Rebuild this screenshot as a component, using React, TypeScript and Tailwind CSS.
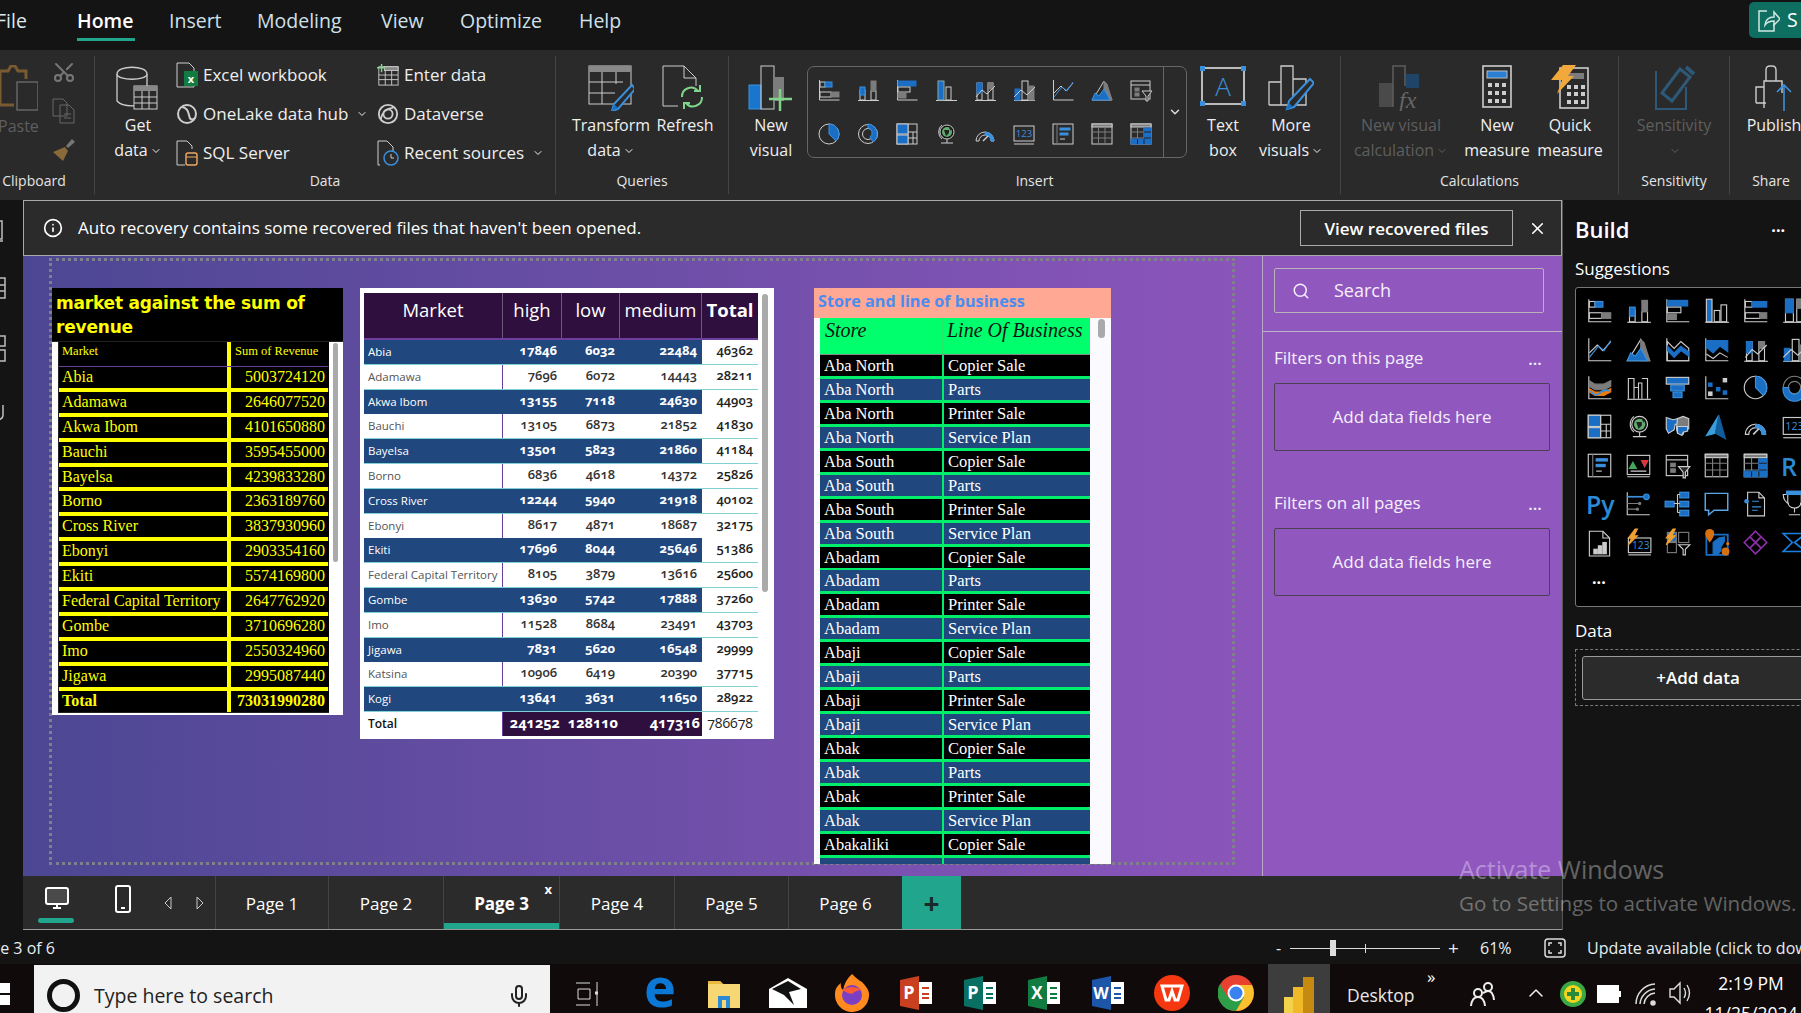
import type { ReactNode } from 'react';
import { ChevronDown, ChevronUp, Info, Mic, Scissors, Search, X } from 'lucide-react';

const L = '#cdcdcd';
const B = '#1a6fc4';
const G = '#7c7c7c';

// tiny svg helpers so the chart glyphs stay readable
const rc = (x: number, y: number, w: number, h: number, f = 'none', s = L) => (
  <rect x={x} y={y} width={w} height={h} fill={f} stroke={s} strokeWidth="1" />
);
const pt = (d: string, f = 'none', s = L, sw = 1) => <path d={d} fill={f} stroke={s} strokeWidth={sw} />;
const axis = pt('M2.5 2v20h20');
const base = pt('M2 22.5h21');

const viz: Record<string, ReactNode> = {
  stackBar: <>{axis}{rc(3, 4, 5, 5)}{rc(8, 4, 7, 5, B, '#3a90dd')}{rc(3, 14, 11, 5)}{rc(14, 14, 8, 5, G, G)}</>,
  stackCol: <>{base}{rc(4, 12, 5, 10)}{rc(4, 9, 5, 8, B, '#3a90dd')}{rc(15, 13, 5, 9)}{rc(15, 3, 5, 10, G, G)}</>,
  clusBar: <>{axis}{rc(3, 3, 18, 5, B, B)}{rc(3, 9, 12, 5, 'none')}{rc(3, 15, 8, 5, G, G)}</>,
  clusCol: <>{base}{rc(4, 3, 6, 19, B, '#8aa')}{rc(12, 9, 5, 13)}</>,
  clusCol2: <>{base}{rc(3, 2, 5, 20, B, L)}{rc(10, 12, 5, 10)}{rc(16, 7, 5, 15)}</>,
  fullBar: <>{axis}{rc(3, 4, 6, 5)}{rc(9, 4, 13, 5, B, B)}{rc(3, 14, 13, 5)}{rc(16, 14, 6, 5, G, G)}</>,
  fullCol: <>{base}{rc(4, 2, 7, 20)}{rc(4, 2, 7, 12, B, B)}{rc(14, 2, 7, 20)}{rc(14, 2, 7, 8, G, G)}</>,
  line: <>{axis}{pt('M3 15l7-7 5 5 7-8')}{pt('M3 19l8-10 5 4 6-9', 'none', '#3a90dd')}</>,
  area: <>{pt('M2 22l6-9 6-10 8 19z')}{pt('M14 3l3 3 5 16h-8z', G, G)}{pt('M2 22l3-7 4 3 5-7 6 11z', B, '#3a90dd')}</>,
  stackArea: <>{axis}{pt('M3 5l6 6 6-6 7 6v11H3z', 'none')}{pt('M3 9l6 6 6-6 7 5v4l-7-5-6 6-6-6z', B, B)}</>,
  ribbonArea: <>{axis}{pt('M3 4h19v10l-7-5-6 6-6-5z', B, B)}{pt('M3 16l6 4 6-5 7 4')}</>,
  lineCol: <>{base}{rc(4, 5, 5, 17)}{rc(4, 5, 5, 10, B, B)}{rc(15, 5, 5, 17)}{rc(15, 5, 5, 6, G, G)}{pt('M3 19l6-7 5 4 8-8')}</>,
  lineCol2: <>{base}{rc(3, 11, 5, 11, B, B)}{rc(10, 3, 6, 19)}{rc(17, 8, 5, 14, G, G)}{pt('M2 19l7-7 6 5 8-8')}</>,
  ribbon: <>{axis}{pt('M3 6l5 3h8l6-3v5l-6 3H8l-5-3z', G, G)}{pt('M3 13l5 3h8l6-3v3l-6 3H8l-5-3z', '#e87a10', '#e87a10')}{pt('M4 15q4 6 8 2t9-2', 'none', '#3a90dd', 1.5)}</>,
  waterfall: <>{base}{pt('M3 22V4h5v18M8 12h4v10M12 12V8h3v14M15 4h5v18', 'none')}</>,
  funnel: <>{rc(2, 3, 20, 6, B, L)}{rc(6, 10, 12, 5, B, '#3a90dd')}{rc(8, 16, 8, 5, B, '#3a90dd')}</>,
  scatter: <>{axis}{rc(5, 8, 3, 3, B, B)}{rc(12, 12, 3, 3, B, B)}{rc(18, 4, 3, 3, L, L)}{rc(5, 16, 3, 3, L, L)}{rc(18, 15, 3, 3, B, B)}</>,
  pie: <><circle cx="12" cy="12" r="10" fill="none" stroke={L} />{pt('M12 2a10 10 0 0 1 7 17l-7-7z', B, '#3a90dd')}</>,
  donut: <><circle cx="12" cy="12" r="9.5" fill="none" stroke={L} /><circle cx="12" cy="12" r="5.5" fill="none" stroke={L} />{pt('M12 2a10 10 0 0 1 5 18l-3-5a5 5 0 0 0-2-9z', B, '#3a90dd')}</>,
  donut2: <><circle cx="12" cy="12" r="10" fill="none" stroke={G} strokeWidth="1" /><circle cx="12" cy="12" r="5.5" fill="none" stroke={G} />{pt('M2 12a10 10 0 0 0 20 4l-5-2a5 5 0 0 1-10-2z', B, '#3a90dd')}</>,
  tree: <>{rc(2, 2, 20, 20)}{pt('M13 2v20M13 10h9M13 16h9M18 10v12')}{rc(2, 2, 11, 10, B, L)}{rc(2, 13, 11, 9, B, L)}</>,
  globe: <><circle cx="13" cy="10" r="7" fill="#111" stroke={L} /><circle cx="13" cy="10" r="5" fill="#5fae6f" /><path d="M10 8h5v3l-3 3zM15 6h2v3z" fill="#222" />{pt('M8 3a9 9 0 0 0 0 14M7 21h12M13 17v4')}</>,
  fillMap: <>{pt('M2 4l6 2 4-1v5h-2l-1 5-5 3-2-4z', B, L)}{pt('M12 5l5-2 5 2v9l-4 1-1 4-5-1-1-4z', G, L)}{pt('M12 12h9v4l-4 1-1 3-4-2z', B, L)}</>,
  arc: <>{pt('M14 2L3 20l8-2z', '#3a9fdc', '#3a9fdc')}{pt('M14 2l6 21-9-5z', '#125e9c', '#125e9c')}</>,
  gauge: <>{pt('M3 19a9 9 0 0 1 18 0h-3a6 6 0 0 0-12 0z', 'none')}{pt('M12 10a9 9 0 0 1 9 9h-3a6 6 0 0 0-6-6z', '#3a90dd', '#3a90dd')}{pt('M10 19l5-5', 'none', L, 1.5)}</>,
  card: <>{rc(2, 4, 20, 15)}{pt('M2 22h20')}<text x="12" y="15" fontSize="9.5" fill="#3a90dd" textAnchor="middle" fontFamily="Open Sans">123</text></>,
  list: <>{rc(2, 2, 20, 20)}{pt('M6 2v20', 'none', G)}{rc(9, 6, 10, 2, '#3a90dd', '#3a90dd')}{rc(9, 11, 8, 2, '#3a90dd', '#3a90dd')}{pt('M9 17h5', 'none', L)}</>,
  kpi: <>{rc(2, 3, 20, 17)}{pt('M2 22h20M5 17h14')}<path d="M7 8l4 7H3zM14 7h7l-3.5 7z" fill="#3fa85a" /><path d="M14 7h7l-3.5 7z" fill="#e0323c" /></>,
  slicer: <>{rc(2, 3, 19, 18)}{pt('M2 7h19')}{rc(6, 10, 4, 3, G, G)}{rc(6, 15, 4, 3, G, G)}{pt('M13 13h10l-4 5v5h-2v-5z', '#2a2a2a')}</>,
  table: <>{rc(2, 2, 20, 20)}{rc(2, 2, 20, 3, G, L)}{pt('M2 10h20M2 16h20M8.5 5v17M15 5v17', 'none', G)}</>,
  matrix: <>{rc(2, 2, 20, 20)}{rc(2, 2, 20, 3, G, L)}{pt('M2 10h20M2 16h20M8.5 5v17M15 5v17', 'none', G)}{rc(15, 6, 7, 15, B, B)}{rc(2, 17, 20, 5, B, B)}{pt('M15 10h7M15 16h7M8.5 17v5M15 17v5', 'none', '#222')}</>,
  influ: <>{pt('M2 2v20h20')}{pt('M2 6h14', 'none', '#3a90dd', 1.5)}<circle cx="19" cy="6" r="2.5" fill={B} stroke="#3a90dd" />{pt('M2 12h10M2 17h8', 'none', G)}<circle cx="13" cy="12" r="1.5" fill={G} /><circle cx="11" cy="17" r="1.5" fill={G} /></>,
  decomp: <>{rc(1, 10, 8, 5, B, '#3a90dd')}{rc(14, 2, 8, 5, B, '#3a90dd')}{rc(14, 10, 8, 5, B, '#3a90dd')}{rc(14, 18, 8, 5, B, '#3a90dd')}{pt('M9 12h3M12 4v16M12 4h2M12 12h2M12 20h2')}</>,
  qa: <>{pt('M2 3h20v15H10l-5 4v-4H2z', 'none', '#5aa6e8', 1.3)}</>,
  doc: <>{pt('M5 2h10l5 5v16H5z')}{pt('M15 2v5h5')}<circle cx="4" cy="10" r="2" fill="#3a90dd" />{pt('M9 10h6M9 15h8M9 18h5', 'none', '#3a90dd')}</>,
  trophy: <>{pt('M6 2h12v9q-1 5-6 5t-6-5z', 'none')}{pt('M6 4H2q0 6 5 8M18 4h4q0 6-5 8M12 16v4M7 22h10')}{rc(5, 1, 14, 3, '#3a90dd', '#3a90dd')}</>,
  report: <>{pt('M3 2h12l6 6v16H3z')}{pt('M15 2v6h6')}{rc(7, 18, 3, 4, L, L)}{rc(11, 15, 3, 7, L, L)}{rc(15, 12, 3, 10, L, L)}</>,
  smart: <>{rc(3, 8, 20, 13)}{pt('M3 23h20')}<text x="14" y="18" fontSize="9" fill="#3a90dd" textAnchor="middle" fontFamily="Open Sans">123</text>{pt('M9 0L3 8h3l-3 6 8-8H8l3-6z', '#f0a030', '#f0a030')}</>,
  smartSl: <>{rc(3, 12, 8, 9, 'none', G)}{rc(13, 3, 9, 9, 'none', G)}{rc(3, 3, 8, 8, B, G)}{pt('M13 14h10l-4 4v5h-2v-5z', '#000')}{pt('M8 0L2 8h3l-3 6 8-8H7l3-6z', '#f0a030', '#f0a030')}</>,
  azure: <>{pt('M3 5h19v18H3z', 'none', B, 1.6)}{pt('M9 23V12l5-4 5-1v4l-3 5v3l-3 4z', '#1a6fc4', '#1a6fc4')}<path d="M6 0a4 4 0 0 1 4 4q0 3-4 8-4-5-4-8a4 4 0 0 1 4-4z" fill="#d9700f" /><circle cx="20" cy="20" r="3.5" fill="#d9700f" /><circle cx="22" cy="13" r="1.5" fill="#d9700f" /></>,
  apps: <>{pt('M12 2l10 10-10 10L2 12z', 'none', '#8a2fa5', 1.5)}{pt('M7 7l10 10M17 7L7 17', 'none', '#8a2fa5', 1.5)}</>,
  auto: <>{pt('M2 4h20L12 12l10 8H2l8-8z', 'none', '#1a7fe0', 1.5)}</>,
};

function Viz({ n, s = 24 }: { n: string; s?: number }) {
  return <svg width={s} height={s} viewBox="0 0 24 24" className="shrink-0 overflow-visible">{viz[n]}</svg>;
}

function Big({ children, w = 46, h = 46 }: { children: ReactNode; w?: number; h?: number }) {
  return <svg width={w} height={h} viewBox={`0 0 ${w} ${h}`} className="shrink-0">{children}</svg>;
}

const gallery = ['stackBar', 'stackCol', 'clusBar', 'clusCol', 'lineCol', 'lineCol2', 'line', 'area', 'slicer', 'pie', 'donut', 'tree', 'globe', 'gauge', 'card', 'list', 'table', 'matrix'];
const suggestions = [
  'stackBar', 'stackCol', 'clusBar', 'clusCol2', 'fullBar', 'fullCol',
  'line', 'area', 'stackArea', 'ribbonArea', 'lineCol', 'lineCol2',
  'ribbon', 'waterfall', 'funnel', 'scatter', 'pie', 'donut2',
  'tree', 'globe', 'fillMap', 'arc', 'gauge', 'card',
  'list', 'kpi', 'slicer', 'table', 'matrix', 'R',
  'Py', 'influ', 'decomp', 'qa', 'doc', 'trophy',
  'report', 'smart', 'smartSl', 'azure', 'apps', 'auto',
];

const revenue = [
  ['Abia', '5003724120'], ['Adamawa', '2646077520'], ['Akwa Ibom', '4101650880'], ['Bauchi', '3595455000'],
  ['Bayelsa', '4239833280'], ['Borno', '2363189760'], ['Cross River', '3837930960'], ['Ebonyi', '2903354160'],
  ['Ekiti', '5574169800'], ['Federal Capital Territory', '2647762920'], ['Gombe', '3710696280'], ['Imo', '2550324960'],
  ['Jigawa', '2995087440'], ['Total', '73031990280'],
];

const matrix = [
  ['Abia', '17846', '6032', '22484', '46362'], ['Adamawa', '7696', '6072', '14443', '28211'],
  ['Akwa Ibom', '13155', '7118', '24630', '44903'], ['Bauchi', '13105', '6873', '21852', '41830'],
  ['Bayelsa', '13501', '5823', '21860', '41184'], ['Borno', '6836', '4618', '14372', '25826'],
  ['Cross River', '12244', '5940', '21918', '40102'], ['Ebonyi', '8617', '4871', '18687', '32175'],
  ['Ekiti', '17696', '8044', '25646', '51386'], ['Federal Capital Territory', '8105', '3879', '13616', '25600'],
  ['Gombe', '13630', '5742', '17888', '37260'], ['Imo', '11528', '8684', '23491', '43703'],
  ['Jigawa', '7831', '5620', '16548', '29999'], ['Katsina', '10906', '6419', '20390', '37715'],
  ['Kogi', '13641', '3631', '11650', '28922'],
];

const lines = ['Copier Sale', 'Parts', 'Printer Sale', 'Service Plan'];
const stores = ['Aba North', 'Aba South', 'Abadam', 'Abaji', 'Abak', 'Abakaliki'];
const storeRows = stores.flatMap((s) => lines.map((l) => [s, l])).slice(0, 21);

function RibbonBtn({ icon, text, w, dim, caret }: { icon: ReactNode; text: string[]; w: number; dim?: boolean; caret?: boolean }) {
  return (
    <div className={`flex flex-col items-center pt-[9px] shrink-0 ${dim ? 'text-[#5e5e5e]' : 'text-[#efefef]'}`} style={{ width: w }}>
      <div className="h-[48px] flex items-start justify-center">{icon}</div>
      {text.map((t, i) => (
        <div key={t + i} className="h-[25px] leading-[25px] text-[16px] whitespace-nowrap flex items-center">
          {t}
          {caret && i === text.length - 1 && <ChevronDown size={12} className="ml-[2px]" />}
        </div>
      ))}
    </div>
  );
}

function Group({ w, label, labelPad = 0, children }: { w: number; label: string; labelPad?: number; children: ReactNode }) {
  return (
    <div className="h-[138px] mt-[6px] border-r border-[#444] flex flex-col shrink-0" style={{ width: w }}>
      <div className="h-[113px] flex">{children}</div>
      <div className="h-[24px] leading-[24px] text-[14px] text-center text-[#e4e4e4] whitespace-nowrap" style={{ paddingRight: labelPad }}>{label}</div>
    </div>
  );
}

function SmallBtn({ icon, text, caret }: { icon: ReactNode; text: string; caret?: boolean }) {
  return (
    <div className="h-[39px] flex items-center gap-[5px] text-[17px] text-[#efefef] whitespace-nowrap">
      <span className="w-[22px] h-[26px] flex items-center justify-center">{icon}</span>
      {text}
      {caret && <ChevronDown size={12} className="ml-[3px]" />}
    </div>
  );
}

function Ribbon() {
  return (
    <div className="h-[150px] bg-[#2a2a2a] flex shrink-0">
      <Group w={95} label="Clipboard" labelPad={26}>
        <div className="w-[54px] pt-[9px] text-[#5e5e5e] text-[16px] flex flex-col">
          <svg width="40" height="46" viewBox="0 0 40 46" className="-ml-[2px]">
            <path d="M2 6h8l3-5h4l3 5h8v8M2 6v34h14" fill="none" stroke="#7a5a30" strokeWidth="3" />
            <rect x="19" y="17" width="21" height="28" fill="none" stroke="#666" strokeWidth="1.5" />
          </svg>
          <span className="-ml-[2px] mt-[3px] leading-[25px]">Paste</span>
        </div>
        <div className="flex flex-col pt-[4px] gap-[14px] -ml-[2px]">
          <Scissors size={24} className="text-[#777] -rotate-90" />
          <svg width="24" height="26" viewBox="0 0 24 26" fill="none" stroke="#666"><path d="M1 1h10l4 4v13H1zM8 7h9l5 5v13H8z" fill="#2a2a2a" /><path d="M12 16h7M12 20h7" /></svg>
          <svg width="24" height="24" viewBox="0 0 24 24"><path d="M14 8l6-7 3 3-7 6z" fill="#777" /><path d="M1 14l12-5 3 4-5 10z" fill="#8a6a3a" /></svg>
        </div>
      </Group>
      <Group w={461} label="Data">
        <div className="ml-[12px]">
          <RibbonBtn
            w={62}
            text={['Get', 'data']}
            caret
            icon={
              <Big w={44}>
                <path d="M1 9c0-9 30-9 30 0v26c0 7-24 8-30 1z" fill="none" stroke={L} strokeWidth="1.3" />
                <path d="M1 9c0 7 30 7 30 0" fill="none" stroke={L} strokeWidth="1.3" />
                <rect x="18" y="21" width="23" height="23" fill="#2a2a2a" stroke={L} />
                <rect x="18" y="21" width="23" height="5" fill="#888" />
                <path d="M18 32h23M18 38h23M26 26v18M33 26v18" stroke={L} />
              </Big>
            }
          />
        </div>
        <div className="w-[201px] ml-[7px] -mt-[1px]">
          <SmallBtn text="Excel workbook" icon={<svg width="22" height="26" viewBox="0 0 22 26"><path d="M1 1h12l5 5v19H1z" fill="none" stroke={L} /><rect x="8" y="9" width="14" height="15" fill="#107c41" /><text x="15" y="21" fontSize="11" fontWeight="700" fill="#fff" textAnchor="middle">x</text></svg>} />
          <SmallBtn text="OneLake data hub" caret icon={<svg width="22" height="24" viewBox="0 0 22 24" fill="none" stroke={L} strokeWidth="2"><circle cx="11" cy="12" r="9" /><path d="M6 5q6 1 7 8t6 3" /></svg>} />
          <SmallBtn text="SQL Server" icon={<svg width="22" height="26" viewBox="0 0 22 26" fill="none"><path d="M1 25V1h10l5 5v3" stroke={L} /><path d="M1 25h8" stroke={L} /><rect x="10" y="13" width="11" height="12" rx="2" stroke="#f0a860" strokeWidth="1.4" /><path d="M10 17h11" stroke="#f0a860" /></svg>} />
        </div>
        <div className="w-[178px] -mt-[1px]">
          <SmallBtn text="Enter data" icon={<svg width="24" height="24" viewBox="0 0 24 24" fill="none" stroke={L}><rect x="2" y="3" width="21" height="20" /><rect x="8" y="3" width="15" height="4" fill="#888" /><path d="M2 12h21M2 17h21M9 7v16M16 7v16" /><path d="M5 0v9M0 4h9" stroke="#7fd48a" strokeWidth="1.6" /></svg>} />
          <SmallBtn text="Dataverse" icon={<svg width="24" height="24" viewBox="0 0 24 24" fill="none" stroke={L} strokeWidth="2"><circle cx="12" cy="12" r="10" /><circle cx="12" cy="12" r="5" /><path d="M4 18q2-12 14-13" /></svg>} />
          <SmallBtn text="Recent sources" caret icon={<svg width="22" height="26" viewBox="0 0 22 26" fill="none"><path d="M3 25H1V1h9l6 6v4" stroke={L} /><circle cx="14" cy="18" r="7" stroke="#3a90dd" strokeWidth="1.5" /><path d="M14 14v4h3" stroke={L} /></svg>} />
        </div>
      </Group>
      <Group w={173} label="Queries">
        <RibbonBtn
          w={110}
          text={['Transform', 'data']}
          caret
          icon={
            <Big>
              <rect x="1" y="1" width="42" height="38" fill="none" stroke={L} />
              <rect x="1" y="1" width="42" height="6" fill="#888" />
              <path d="M1 17h34M1 28h26M14 7v32M28 7v12" stroke={L} />
              <path d="M44 20l3 4-17 20-6 2 2-7z" fill="#2a2a2a" stroke="#3a90dd" strokeWidth="2" />
              <path d="M26 39l4 4-6 3z" fill="#1a6fc4" />
            </Big>
          }
        />
        <div className="-ml-[12px]">
          <RibbonBtn
            w={62}
            text={['Refresh']}
            icon={
              <Big>
                <path d="M16 41H1V1h21l12 12v8M22 1v12h12" fill="none" stroke={L} />
                <path d="M20 32a9 9 0 0 1 16-6M40 32a9 9 0 0 1-16 6" fill="none" stroke="#7fd48a" strokeWidth="2" />
                <path d="M38 20v6h-6M22 44v-6h6" fill="none" stroke="#7fd48a" strokeWidth="2" />
              </Big>
            }
          />
        </div>
      </Group>
      <Group w={612} label="Insert">
        <RibbonBtn
          w={84}
          text={['New', 'visual']}
          icon={
            <Big>
              <rect x="1" y="20" width="12" height="24" fill="#1a76cc" stroke="#3a90dd" />
              <rect x="13" y="1" width="13" height="43" fill="none" stroke={L} />
              <rect x="26" y="12" width="10" height="24" fill={G} />
              <path d="M32 24v22M21 34h23" stroke="#7fd48a" strokeWidth="2.5" />
            </Big>
          }
        />
        <div className="w-[380px] h-[92px] mt-[10px] -ml-[6px] border border-[#666] rounded-[7px] flex shrink-0">
          <div className="w-[355px] grid grid-cols-[repeat(9,39px)] grid-rows-[44px_44px] pl-[9px] pt-[11px] items-start">
            {gallery.map((n, i) => <Viz key={i} n={n} />)}
          </div>
          <div className="flex-1 border-l border-[#666] flex items-center justify-center text-[#ddd]"><ChevronDown size={14} strokeWidth={2.5} /></div>
        </div>
        <RibbonBtn
          w={72}
          text={['Text', 'box']}
          icon={
            <div className="relative w-[44px] h-[38px] mt-[2px] border-2 border-[#bbb] flex items-center justify-center text-[#3a90dd] text-[26px] font-light">
              A
              <span className="absolute -left-[3px] -top-[3px] w-[5px] h-[5px] bg-[#3a90dd]" />
              <span className="absolute -right-[3px] -top-[3px] w-[5px] h-[5px] bg-[#3a90dd]" />
              <span className="absolute -left-[3px] -bottom-[3px] w-[5px] h-[5px] bg-[#3a90dd]" />
              <span className="absolute -right-[3px] -bottom-[3px] w-[5px] h-[5px] bg-[#3a90dd]" />
            </div>
          }
        />
        <RibbonBtn
          w={64}
          text={['More', 'visuals']}
          caret
          icon={
            <Big>
              <path d="M1 40V17h12M13 40V1h12v40M1 40h37V14H25" fill="none" stroke={L} strokeWidth="1.3" />
              <path d="M42 14l4 4-20 24-7 2 2-8z" fill="#2a2a2a" stroke="#3a90dd" strokeWidth="2" />
              <path d="M21 38l4 4-7 3z" fill="#1a6fc4" />
            </Big>
          }
        />
      </Group>
      <Group w={278} label="Calculations">
        <RibbonBtn
          w={120}
          dim
          text={['New visual', 'calculation']}
          caret
          icon={
            <Big>
              <rect x="1" y="18" width="14" height="24" fill="#4a4a4a" />
              <path d="M15 42V1h12v20" fill="none" stroke="#5e5e5e" strokeWidth="1.5" />
              <rect x="28" y="9" width="13" height="14" fill="#1e4467" />
              <text x="21" y="43" fontSize="24" fontStyle="italic" fontFamily="Liberation Serif" fill="#666">fx</text>
            </Big>
          }
        />
        <RibbonBtn
          w={72}
          text={['New', 'measure']}
          icon={
            <svg width="30" height="43" viewBox="0 0 30 43">
              <rect x="1" y="1" width="28" height="41" fill="none" stroke={L} strokeWidth="1.6" />
              <rect x="5" y="6" width="20" height="7" fill="#2a80d2" stroke="#bbb" />
              <path d="M6 18h4v4H6zM13 18h4v4h-4zM20 18h4v4h-4zM6 26h4v4H6zM13 26h4v4h-4zM20 26h4v4h-4zM6 34h4v4H6zM13 34h4v4h-4zM20 34h4v4h-4z" fill={L} />
            </svg>
          }
        />
        <RibbonBtn
          w={74}
          text={['Quick', 'measure']}
          icon={
            <svg width="40" height="44" viewBox="0 0 40 44">
              <rect x="10" y="3" width="28" height="40" fill="none" stroke={L} strokeWidth="1.6" />
              <rect x="16" y="8" width="18" height="6" fill={G} />
              <path d="M17 20h4v4h-4zM24 20h4v4h-4zM31 20h4v4h-4zM17 27h4v4h-4zM24 27h4v4h-4zM31 27h4v4h-4zM17 35h4v4h-4zM24 35h4v4h-4zM31 35h4v4h-4z" fill={L} />
              <path d="M13 0h13L18 11h6L7 29l5-14H1z" fill="#f2a93b" />
            </svg>
          }
        />
      </Group>
      <Group w={111} label="Sensitivity">
        <RibbonBtn
          w={110}
          dim
          caret
          text={['Sensitivity', '']}
          icon={
            <svg width="44" height="46" viewBox="0 0 44 46" fill="none" stroke="#2d5878" strokeWidth="2">
              <path d="M4 6v38h30V22" />
              <path d="M10 28L28 4l10 8-18 24z" strokeWidth="3" />
              <path d="M34 2l8 7" strokeWidth="4" />
            </svg>
          }
        />
      </Group>
      <div className="w-[72px] h-[138px] mt-[6px] flex flex-col shrink-0">
        <div className="h-[113px] flex ml-[8px]">
          <RibbonBtn
            w={72}
            text={['Publish']}
            icon={
              <Big w={40}>
                <path d="M2 38V22h8M12 16V5q0-4 4-4h2q4 0 4 4v11M10 43V16h18v12M2 38h10" fill="none" stroke={L} strokeWidth="1.4" />
                <path d="M30 46V20M23 27l7-7 7 7" fill="none" stroke="#3a90dd" strokeWidth="1.6" />
              </Big>
            }
          />
        </div>
        <div className="h-[24px] leading-[24px] text-[14px] text-center text-[#e4e4e4] pl-[10px]">Share</div>
      </div>
    </div>
  );
}

function RevenueCard() {
  return (
    <div className="relative w-[291px] h-[427px] bg-white shrink-0">
      <div className="h-[54px] bg-black text-[#ffff00] text-[17px] font-bold leading-[24px] px-[4px] pt-[3px] font-['DejaVu_Sans',sans-serif] tracking-[-0.2px] border-b border-[#222]">
        market against the sum of revenue
      </div>
      <div className="ml-[6px] w-[271px] font-['Liberation_Serif',serif] text-[#ffff00] border-x border-b border-[#222]">
        <div className="grid grid-cols-[168px_98px] gap-x-[4px] h-[25px] bg-[#ffff00] border-b border-[#6b3fa0] text-[12.5px]">
          <div className="bg-black pl-[3px]">Market</div>
          <div className="bg-black pl-[4px]">Sum of Revenue</div>
        </div>
        {revenue.map(([m, v], i) => {
          const last = i === revenue.length - 1;
          return (
            <div key={m} className={`grid grid-cols-[168px_98px] gap-x-[4px] bg-[#ffff00] text-[16px] leading-[20px] ${last ? 'h-[21px] font-bold' : 'h-[24.9px] pb-[4px]'}`}>
              <div className="bg-black pl-[3px] whitespace-nowrap">{m}</div>
              <div className="bg-black pr-[4px] text-right">{v}</div>
            </div>
          );
        })}
      </div>
      <div className="absolute right-[5px] top-[55px] w-[5px] h-[219px] rounded-full bg-[#aaa]" />
    </div>
  );
}

// Open Sans is the installed face that actually has old-style figures
const numCell = 'flex items-start justify-end pr-[5px] pt-[1px] text-[13px] oldstyle-nums';

function MatrixCard() {
  return (
    <div className="relative w-[414px] h-[451px] bg-white ml-[17px] pt-[5px] pl-[4px] shrink-0">
      <div className="w-[394px] grid grid-cols-[139px_59px_58px_82px_56px] h-[47px] bg-[#2e0f3d] text-white text-[18.5px] leading-[30px] border-b-2 border-[#6b3fa0]">
        <div className="text-center pt-[2px] border-r border-[#6d5a7a]">Market</div>
        <div className="text-center pt-[2px] border-r border-[#6d5a7a]">high</div>
        <div className="text-center pt-[2px] border-r border-[#6d5a7a]">low</div>
        <div className="text-center pt-[2px] border-r border-[#6d5a7a] whitespace-nowrap">medium</div>
        <div className="text-center pt-[2px] font-bold">Total</div>
      </div>
      {matrix.map((r, i) => {
        const blue = i % 2 === 0;
        const cell = blue ? 'bg-[#20477e] text-white font-bold' : 'bg-white text-[#333] font-semibold';
        return (
          <div key={r[0]} className="w-[394px] grid grid-cols-[139px_59px_58px_82px_56px] h-[24.8px] border-b-[3px] border-[#7fd1d3]">
            <div className={`pl-[4px] text-[11.5px] leading-[24px] whitespace-nowrap border-r ${blue ? 'bg-[#20477e] text-white border-[#20477e]' : 'bg-white text-[#555] border-[#6b3fa0]'}`}>{r[0]}</div>
            <div className={`${numCell} ${cell}`}>{r[1]}</div>
            <div className={`${numCell} ${cell}`}>{r[2]}</div>
            <div className={`${numCell} ${cell}`}>{r[3]}</div>
            <div className={`${numCell} bg-white text-[#222] font-semibold`}>{r[4]}</div>
          </div>
        );
      })}
      <div className="w-[394px] grid grid-cols-[139px_59px_58px_82px_56px] h-[22px]">
        <div className="pl-[4px] text-[12px] leading-[24px] font-semibold text-[#111] border-r border-[#6b3fa0]">Total</div>
        <div className={`${numCell} bg-[#2e0f3d] text-white font-bold !pr-[2px] !pt-0 !text-[14.5px]`}>241252</div>
        <div className={`${numCell} bg-[#2e0f3d] text-white font-bold !pr-[2px] !pt-0 !text-[14.5px]`}>128110</div>
        <div className={`${numCell} bg-[#2e0f3d] text-white font-bold !pr-[2px] !pt-0 !text-[14.5px]`}>417316</div>
        <div className={`${numCell} text-[#222] !pt-0 !text-[14px]`}>786678</div>
      </div>
      <div className="absolute left-[402px] top-[6px] w-[6px] h-[298px] rounded-full bg-[#aaa]" />
    </div>
  );
}

function StoreCard() {
  return (
    <div className="relative w-[297px] h-[576px] bg-[#fbfbff] ml-[40px] overflow-hidden shrink-0">
      <div className="h-[30px] bg-[#ffa893] text-[#4a8cf0] font-bold text-[16.2px] leading-[27px] pl-[4px]">Store and line of business</div>
      <div className="ml-[6px] w-[270px] font-['Liberation_Serif',serif]">
        <div className="grid grid-cols-[123px_147px] h-[37px] bg-[#00ff6c] border-b border-[#888] italic text-[20px] leading-[24px] text-[#111]">
          <div className="pl-[5px] border-r border-[#22e866]">Store</div>
          <div className="pl-[4px] whitespace-nowrap">Line Of Business</div>
        </div>
        {storeRows.map(([s, l], i) => (
          <div key={`${s}${l}`} className="grid grid-cols-[122px_146px] gap-x-[2px] h-[23.95px] pb-[3px] bg-[#00ee6a] text-white text-[16.5px] leading-[21px]">
            <div className={`pl-[4px] whitespace-nowrap ${i % 2 ? 'bg-[#20477e]' : 'bg-black'}`}>{s}</div>
            <div className={`pl-[4px] whitespace-nowrap ${i % 2 ? 'bg-[#20477e]' : 'bg-black'}`}>{l}</div>
          </div>
        ))}
        <div className="grid grid-cols-[122px_146px] gap-x-[2px] h-[24px] bg-[#00ee6a]">
          <div className="bg-[#20477e]" />
          <div className="bg-[#20477e]" />
        </div>
      </div>
      <div className="absolute left-[284px] top-[31px] w-[7px] h-[19px] rounded-full bg-[#aaa]" />
    </div>
  );
}

function FilterPane() {
  return (
    <div className="w-[300px] bg-[#9057bf] border-l border-[#b9a8c8] text-[#f6effc] shrink-0">
      <div className="h-[76px] border-b border-[#bdb3c6] pl-[11px] pt-[12px]">
        <div className="h-[45px] w-[270px] border border-[#b9b3b9] rounded-[2px] flex items-center text-[18px]">
          <Search size={18} className="ml-[17px]" />
          <span className="ml-[24px]">Search</span>
        </div>
      </div>
      <div className="pl-[11px] pr-[12px] pt-[14px]">
        {['Filters on this page', 'Filters on all pages'].map((t) => (
          <div key={t} className="mb-[40px]">
            <div className="flex justify-between items-center h-[24px] text-[17px] pr-[8px]">
              <span>{t}</span>
              <span className="text-[14px] font-bold leading-none tracking-[0.5px] mt-[4px]">...</span>
            </div>
            <div className="mt-[13px] h-[68px] w-[276px] border border-[#4b4050] rounded-[2px] flex items-center justify-center text-[17px]">Add data fields here</div>
          </div>
        ))}
      </div>
    </div>
  );
}

function BuildPane() {
  return (
    <div className="flex-1 bg-[#141414] relative overflow-hidden border-l border-[#555] text-white pl-[12px]">
      <div className="flex items-center h-[58px] w-[210px] justify-between">
        <span className="text-[22px] font-semibold">Build</span>
        <span className="text-[16px] font-bold -mt-[6px]">...</span>
      </div>
      <div className="text-[17px] leading-[22px]">Suggestions</div>
      <div className="w-[300px] h-[320px] mt-[7px] bg-black border border-[#777] rounded-[3px] pl-[10px] pt-[9px] grid grid-cols-[repeat(6,39px)] auto-rows-[38.7px] items-start">
        {suggestions.map((n) =>
          n === 'R' || n === 'Py' ? (
            <span key={n} className="text-[#2a8ad6] text-[25px] font-semibold leading-[28px]">{n}</span>
          ) : (
            <Viz key={n} n={n} s={27} />
          ),
        )}
        <span className="text-[16px] font-bold leading-[20px] pl-[6px]">...</span>
      </div>
      <div className="text-[17px] mt-[13px] leading-[22px]">Data</div>
      <div className="w-[300px] h-[57px] mt-[7px] border border-dashed border-[#777] p-[6px]">
        <div className="w-[232px] h-[44px] border border-[#999] rounded-[3px] bg-[#2b2b2b] flex items-center justify-center text-[17px] font-semibold">+Add data</div>
      </div>
    </div>
  );
}

function PageTabs() {
  const tabs = [['Page 1', 113], ['Page 2', 115], ['Page 3', 116], ['Page 4', 115], ['Page 5', 114], ['Page 6', 114]] as const;
  return (
    <div className="h-[54px] bg-[#2b2b2b] border-b border-[#999] flex shrink-0 text-white text-[17px]">
      <div className="w-[192px] flex shrink-0 relative">
        <svg width="24" height="24" viewBox="0 0 24 24" className="ml-[22px] mt-[11px]" fill="none" stroke="#fff" strokeWidth="2"><rect x="1" y="1" width="22" height="16" rx="2" fill="#fff" fillOpacity=".15" /><path d="M8 21h8M12 17v4" /></svg>
        <span className="absolute left-[15px] top-[42px] w-[36px] h-[5px] rounded-full bg-[#21a58c]" />
        <svg width="16" height="28" viewBox="0 0 16 28" className="ml-[46px] mt-[9px]" fill="none" stroke="#fff" strokeWidth="2"><rect x="1" y="1" width="14" height="26" rx="2" /><path d="M6 23h4" /></svg>
        <svg width="8" height="14" viewBox="0 0 8 14" fill="none" stroke="#ccc" className="ml-[33px] mt-[20px]"><path d="M7 1L1 7l6 6z" /></svg>
        <svg width="8" height="14" viewBox="0 0 8 14" fill="none" stroke="#ccc" className="ml-[24px] mt-[20px]"><path d="M1 1l6 6-6 6z" /></svg>
      </div>
      {tabs.map(([t, w]) => (
        <div key={t} className={`relative border-l border-[#444] flex items-center justify-center pt-[2px] shrink-0 ${t === 'Page 3' ? 'font-bold' : ''}`} style={{ width: w }}>
          {t}
          {t === 'Page 3' && <span className="absolute right-[7px] top-[3px] text-[13px] leading-[20px]">x</span>}
          {t === 'Page 3' && <span className="absolute left-0 right-0 bottom-0 h-[6px] bg-[#21a58c]" />}
        </div>
      ))}
      <div className="w-[59px] bg-[#21a58c] flex items-center justify-center text-[#1a2a28] text-[28px] font-bold shrink-0">+</div>
    </div>
  );
}

function Taskbar() {
  const cell = 'w-[64px] pt-[8px] flex justify-center items-center';
  return (
    <div className="h-[49px] bg-[#100a0a] flex shrink-0 relative text-white overflow-hidden">
      <svg width="34" height="49" viewBox="0 0 34 49"><path d="M-4 19h14v10H-4zM-4 31h14v10H-4z" fill="#fff" /></svg>
      <div className="w-[516px] h-[48px] mt-[1px] pt-[13px] bg-[#f2f2f2] flex items-center text-[#222] text-[19.5px] shrink-0">
        <span className="ml-[13px] w-[33px] h-[33px] rounded-full border-[5px] border-[#111] shrink-0" />
        <span className="ml-[14px]">Type here to search</span>
        <Mic size={24} className="ml-auto mr-[19px] text-[#222]" />
      </div>
      <svg width="24" height="26" viewBox="0 0 24 26" fill="none" stroke="#ddd" className="ml-[25px] mt-[17px]">
        <path d="M1 2h14M1 24h14M3 8h12v10H3zM22 1v24" /><path d="M20 12h3" strokeWidth="3" />
      </svg>
      <div className="flex ml-[29px]">
        <div className={cell}><span className="text-[#0a78d4] text-[54px] font-bold leading-none -mt-[14px]">e</span></div>
        <div className={cell}><svg width="32" height="30" viewBox="0 0 32 30"><path d="M0 3h12l3 3h17v24H0z" fill="#f7d774" /><path d="M0 3h12l3 3H0z" fill="#e8b93c" /><path d="M10 30V18h12v12h-4v-8h-4v8z" fill="#2a8ad6" /></svg></div>
        <div className={cell}><svg width="38" height="30" viewBox="0 0 38 30"><path d="M0 11L19 0l19 11v19H0z" fill="#fff" /><path d="M3 11L19 3l13 8-12 3 5 13-10-10z" fill="#111" /></svg></div>
        <div className={cell}><svg width="38" height="38" viewBox="0 0 38 38"><path d="M19 0q6 6 10 8 8 8 7 14a17 17 0 1 1-34-2q0-7 6-11-1 5 2 7 2-10 9-16z" fill="#ff8a1f" /><circle cx="19" cy="21" r="10" fill="#7b3fc4" /><path d="M9 16q10-6 20 0-6 0-10 4-5-1-10-4z" fill="#ff5a36" /></svg></div>
        <div className={cell}><svg width="32" height="34" viewBox="0 0 32 34"><path d="M0 4l19-4v34L0 30z" fill="#c8401f" /><rect x="19" y="6" width="13" height="22" fill="#fff" /><text x="9" y="23" fontSize="18" fontWeight="700" fill="#fff" textAnchor="middle">P</text><path d="M22 12h7M22 18h7M22 22h7" stroke="#c8401f" strokeWidth="2" /></svg></div>
        <div className={cell}><svg width="32" height="34" viewBox="0 0 32 34"><path d="M0 4l19-4v34L0 30z" fill="#0a6f63" /><rect x="19" y="6" width="13" height="22" fill="#fff" /><text x="9" y="23" fontSize="18" fontWeight="700" fill="#fff" textAnchor="middle">P</text><path d="M22 12h7M22 18h7M22 22h7" stroke="#0a6f63" strokeWidth="2" /></svg></div>
        <div className={cell}><svg width="32" height="34" viewBox="0 0 32 34"><path d="M0 4l19-4v34L0 30z" fill="#107c41" /><rect x="19" y="6" width="13" height="22" fill="#fff" /><text x="9" y="23" fontSize="17" fontWeight="700" fill="#fff" textAnchor="middle">X</text><path d="M22 12h7M22 18h7M22 22h7" stroke="#107c41" strokeWidth="2" /></svg></div>
        <div className={cell}><svg width="32" height="34" viewBox="0 0 32 34"><path d="M0 4l19-4v34L0 30z" fill="#1d56a8" /><rect x="19" y="6" width="13" height="22" fill="#fff" /><text x="9" y="23" fontSize="16" fontWeight="700" fill="#fff" textAnchor="middle">W</text><path d="M22 12h7M22 18h7M22 22h7" stroke="#1d56a8" strokeWidth="2" /></svg></div>
        <div className={cell}><svg width="36" height="36" viewBox="0 0 36 36"><circle cx="18" cy="18" r="18" fill="#f5380f" /><path d="M8 11h20l-4 14h-3l-3-9-3 9h-3z" fill="none" stroke="#fff" strokeWidth="3" /></svg></div>
        <div className={cell}><svg width="36" height="36" viewBox="0 0 36 36"><circle cx="18" cy="18" r="18" fill="#e8412f" /><path d="M18 18L2 27a18 18 0 0 0 16 9l8-14z" fill="#2d9e48" /><path d="M18 10h16a18 18 0 0 1-16 26l8-14z" fill="#fbc02d" /><path d="M2 9l8 14L2 27A18 18 0 0 1 2 9z" fill="#2d9e48" /><circle cx="18" cy="18" r="8.5" fill="#fff" /><circle cx="18" cy="18" r="6.5" fill="#3b82f0" /></svg></div>
        <div className="w-[62px] bg-[#3d3d3d] flex justify-center items-end"><svg width="30" height="36" viewBox="0 0 30 36"><rect x="0" y="20" width="10" height="16" fill="#f2d14b" /><rect x="9" y="10" width="10" height="26" fill="#efb92a" /><rect x="19" y="0" width="11" height="36" fill="#c78a10" /></svg></div>
      </div>
      <span className="ml-[17px] mt-[18px] text-[17.5px] text-[#e8e8e8]">Desktop</span>
      <span className="absolute left-[1427px] top-[1px] text-[17px] leading-[24px]">»</span>
      <svg width="26" height="28" viewBox="0 0 26 28" fill="none" stroke="#eee" strokeWidth="2" className="ml-[55px] mt-[16px]"><circle cx="18" cy="7" r="4" /><circle cx="8" cy="13" r="4" /><path d="M1 26q1-9 7-9t7 9M13 13q4-2 5-2 5 0 6 9" /></svg>
      <ChevronUp size={24} strokeWidth={1.5} className="ml-[28px] mt-[17px] text-[#eee]" />
      <svg width="26" height="26" viewBox="0 0 26 26" className="ml-[12px] mt-[17px]"><circle cx="13" cy="13" r="13" fill="#39a845" /><circle cx="13" cy="13" r="9" fill="#f2d51c" /><path d="M13 7v12M7 13h12" stroke="#2a8a38" strokeWidth="4" /></svg>
      <svg width="24" height="18" viewBox="0 0 24 18" className="ml-[11px] mt-[21px]" fill="none"><rect x="1" y="1" width="20" height="16" stroke="#fff" strokeWidth="2" fill="#fff" /><path d="M23 6v6" stroke="#fff" strokeWidth="2" /></svg>
      <svg width="22" height="24" viewBox="0 0 22 24" className="ml-[14px] mt-[18px]" fill="none" stroke="#ddd" strokeWidth="1.5"><path d="M1 22A20 20 0 0 1 20 2M5 22A16 16 0 0 1 20 7M9 22A12 12 0 0 1 20 11" /><circle cx="18" cy="21" r="2" fill="#ddd" /></svg>
      <svg width="22" height="24" viewBox="0 0 22 24" className="ml-[12px] mt-[17px]" fill="none" stroke="#ddd" strokeWidth="1.4"><path d="M1 8h4l6-6v20l-6-6H1zM15 7q3 5 0 10M18 4q5 8 0 16" /></svg>
      <div className="absolute -right-[5px] top-[4px] w-[110px] text-center text-white text-[17.5px] leading-[30px]">
        <div>2:19 PM</div>
        <div className="whitespace-nowrap">11/25/2024</div>
      </div>
    </div>
  );
}

export default function App() {
  return (
    <div className="relative w-[1801px] h-[1013px] flex flex-col overflow-hidden bg-[#141414] font-['Open_Sans',sans-serif]">
      {/* title tabs */}
      <div className="h-[50px] flex shrink-0 text-[19.5px] text-[#cfe0ea] relative">
        <span className="-ml-[4px] mt-[6px] w-[81px] text-[#dbe8ee]">File</span>
        <span className="relative w-[92px] mt-[6px] text-white font-semibold">
          Home
          <span className="absolute left-0 top-[32px] w-[58px] h-[3px] bg-[#21a58c]" />
        </span>
        <span className="w-[88px] mt-[6px]">Insert</span>
        <span className="w-[124px] mt-[6px]">Modeling</span>
        <span className="w-[79px] mt-[6px]">View</span>
        <span className="w-[119px] mt-[6px]">Optimize</span>
        <span className="mt-[6px]">Help</span>
        <div className="absolute left-[1749px] top-[2px] w-[70px] h-[36px] rounded-[5px] bg-[#0e6e5f] flex items-center pl-[9px] gap-[7px] text-white">
          <svg width="22" height="24" viewBox="0 0 22 24" fill="none" stroke="#cfe8e2" strokeWidth="1.5"><path d="M9 3H1v20h15v-7" /><path d="M7 17q1-8 9-8V4l6 7-6 6v-4q-6 0-9 4z" /></svg>
          S
        </div>
      </div>

      <Ribbon />

      <div className="h-[730px] flex shrink-0">
        <div className="w-[23px] shrink-0">
          <svg width="23" height="240" viewBox="0 0 23 240" fill="none" stroke="#bdbdbd" strokeWidth="1.5">
            <path d="M-2 21h4v18h-4M-2 41h5" />
            <path d="M-2 78h7v20h-7M-2 85h7M-2 91h7" />
            <path d="M-2 136h7v10h-7zM-2 150h7v11h-7z" />
            <path d="M3 205v10q0 4-5 5" />
          </svg>
        </div>
        <div className="w-[1539px] flex flex-col shrink-0">
          <div className="h-[56px] border border-[#a8a8a8] bg-[#2b2b2b] flex items-center text-white shrink-0">
            <Info size={20} className="ml-[19px]" />
            <span className="ml-[15px] text-[17px]">Auto recovery contains some recovered files that haven&apos;t been opened.</span>
            <div className="ml-auto h-[36px] w-[213px] pt-[1px] border border-[#aaa] flex items-center justify-center font-semibold text-[17px]">View recovered files</div>
            <X size={19} className="ml-[15px] mr-[14px]" />
          </div>
          <div className="h-[620px] flex shrink-0">
            <div className="relative w-[1239px] shrink-0 bg-linear-to-r from-[#4c4793] to-[#8c55bc] pl-[29px] pt-[32px] flex items-start overflow-hidden">
              <div className="absolute left-[26px] top-[2px] w-[1186px] h-[607px] border-[3px] border-dotted border-[#80808a]" />
              <RevenueCard />
              <MatrixCard />
              <StoreCard />
            </div>
            <FilterPane />
          </div>
          <PageTabs />
        </div>
        <BuildPane />
      </div>

      {/* status bar */}
      <div className="h-[34px] pt-[2px] flex items-center shrink-0 text-[16px] text-[#e6eef2] relative">
        <span className="-ml-[27px]">Page 3 of 6</span>
        <span className="absolute left-[1276px]">-</span>
        <div className="absolute left-[1290px] w-[150px] h-[1px] bg-[#ddd]" />
        <div className="absolute left-[1330px] w-[6px] h-[16px] bg-[#ddd]" />
        <div className="absolute left-[1365px] w-[1px] h-[9px] bg-[#ddd]" />
        <span className="absolute left-[1448px] text-[19px]">+</span>
        <span className="absolute left-[1480px]">61%</span>
        <svg width="22" height="20" viewBox="0 0 22 20" fill="none" stroke="#ddd" className="absolute left-[1544px]"><rect x="1" y="1" width="20" height="18" rx="3" strokeWidth="1.5" /><path d="M5 8V5h3M17 8V5h-3M5 12v3h3M17 12v3h-3" strokeWidth="1.5" /></svg>
        <span className="absolute left-[1587px] whitespace-nowrap">Update available (click to download)</span>
      </div>

      <Taskbar />

      {/* windows watermark */}
      <div className="absolute left-[1459px] top-[851px] text-[#ffffff59] pointer-events-none whitespace-nowrap">
        <div className="text-[25px] leading-[36px]">Activate Windows</div>
        <div className="text-[20.6px] leading-[32px]">Go to Settings to activate Windows.</div>
      </div>
    </div>
  );
}
